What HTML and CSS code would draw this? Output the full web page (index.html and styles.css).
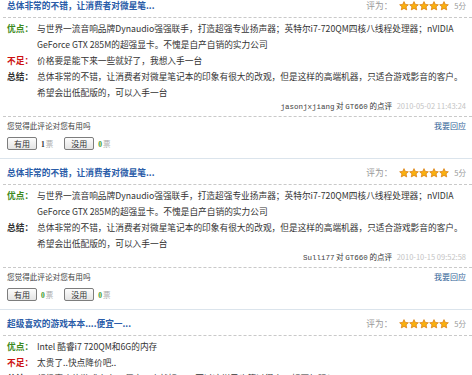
FILE: index.html
```html
<!DOCTYPE html>
<html lang="zh-CN">
<head>
  <meta charset="UTF-8">
  <title>用户点评</title>
  <link rel="stylesheet" href="styles.css">
</head>
<body>
  <svg width="0" height="0" class="defs">
    <defs>
      <symbol id="star" viewBox="0 0 20 20">
        <path d="M10 1.2l2.6 5.6 6.1.7-4.5 4.2 1.2 6.1L10 14.8l-5.4 3 1.2-6.1L1.3 7.5l6.1-.7z" fill="#f9b010" stroke="#d9780a" stroke-width="1.4" stroke-linejoin="round"/>
      </symbol>
    </defs>
  </svg>

  <div class="list">
    <div class="item">
      <div class="head">
        <a class="title" href="#">总体非常的不错，让消费者对微星笔...</a>
        <div class="rate">
          <span class="rate-label">评为：</span>
          <span class="stars">
            <svg><use href="#star"/></svg><svg><use href="#star"/></svg><svg><use href="#star"/></svg><svg><use href="#star"/></svg><svg><use href="#star"/></svg>
          </span>
          <span class="score">5分</span>
        </div>
      </div>
      <div class="body">
        <div class="row"><span class="label good">优点：</span><span class="text">与世界一流音响品牌Dynaudio强强联手，打造超强专业扬声器；英特尔i7-720QM四核八线程处理器；nVIDIA GeForce GTX 285M的超强显卡。不愧是自产自销的实力公司</span></div>
        <div class="row"><span class="label bad">不足：</span><span class="text">价格要是能下来一些就好了，我想入手一台</span></div>
        <div class="row"><span class="label sum">总结：</span><span class="text">总体非常的不错，让消费者对微星笔记本的印象有很大的改观，但是这样的高端机器，只适合游戏影音的客户。希望会出低配版的，可以入手一台</span></div>
      </div>
      <div class="author"><span class="user">jasonjxjiang</span> 对 <span class="user">GT660</span> 的点评 <span class="date">2010-05-02 11:43:24</span></div>
      <div class="foot">
        <div class="ask"><span>您觉得此评论对您有用吗</span><a href="#" class="reply">我要回应</a></div>
        <div class="votes">
          <button>有用</button><span class="count"><b>1</b>票</span>
          <button>没用</button><span class="count"><b class="zero">0</b>票</span>
        </div>
      </div>
    </div>

    <div class="item">
      <div class="head">
        <a class="title" href="#">总体非常的不错，让消费者对微星笔...</a>
        <div class="rate">
          <span class="rate-label">评为：</span>
          <span class="stars">
            <svg><use href="#star"/></svg><svg><use href="#star"/></svg><svg><use href="#star"/></svg><svg><use href="#star"/></svg><svg><use href="#star"/></svg>
          </span>
          <span class="score">5分</span>
        </div>
      </div>
      <div class="body">
        <div class="row"><span class="label good">优点：</span><span class="text">与世界一流音响品牌Dynaudio强强联手，打造超强专业扬声器；英特尔i7-720QM四核八线程处理器；nVIDIA GeForce GTX 285M的超强显卡。不愧是自产自销的实力公司</span></div>
        <div class="row"><span class="label sum">总结：</span><span class="text">总体非常的不错，让消费者对微星笔记本的印象有很大的改观，但是这样的高端机器，只适合游戏影音的客户。希望会出低配版的，可以入手一台</span></div>
      </div>
      <div class="author"><span class="user">Sulli77</span> 对 <span class="user">GT660</span> 的点评 <span class="date">2010-10-15 09:52:58</span></div>
      <div class="foot">
        <div class="ask"><span>您觉得此评论对您有用吗</span><a href="#" class="reply">我要回应</a></div>
        <div class="votes">
          <button>有用</button><span class="count"><b class="zero">0</b>票</span>
          <button>没用</button><span class="count"><b class="zero">0</b>票</span>
        </div>
      </div>
    </div>

    <div class="item">
      <div class="head">
        <a class="title" href="#">超级喜欢的游戏本本....便宜一...</a>
        <div class="rate">
          <span class="rate-label">评为：</span>
          <span class="stars">
            <svg><use href="#star"/></svg><svg><use href="#star"/></svg><svg><use href="#star"/></svg><svg><use href="#star"/></svg><svg><use href="#star"/></svg>
          </span>
          <span class="score">5分</span>
        </div>
      </div>
      <div class="body">
        <div class="row"><span class="label good">优点：</span><span class="text">Intel 酷睿i7 720QM和6G的内存</span></div>
        <div class="row"><span class="label bad">不足：</span><span class="text">太贵了..快点降价吧..</span></div>
        <div class="row"><span class="label sum">总结：</span><span class="text">超级喜欢的游戏本本....便宜一点就好了....不过这样子也算过得去....好要加强！</span></div>
      </div>
    </div>
  </div>
</body>
</html>
```

FILE: styles.css
```css
body {
  margin: 0;
  background: #fff;
  font-family: "Noto Sans CJK SC", "Liberation Sans", sans-serif;
  font-size: 8.7px;
  color: #333;
  overflow: hidden;
}

.defs {
  position: absolute;
}

a {
  text-decoration: none;
}

.list {
  margin-top: -8px;
}

.item {
  padding-left: 3px;
  border-bottom: 1px solid #dbe4ec;
}

.head {
  display: flex;
  justify-content: space-between;
  align-items: center;
  height: 18px;
  padding: 7px 6px 0 4px;
  line-height: 14px;
  border-bottom: 1px dashed #c9c9c9;
  align-items: flex-start;
}

.title {
  color: #2a5ca8;
  font-weight: bold;
}

.rate {
  display: flex;
  align-items: center;
  height: 14px;
}

.rate-label {
  color: #999;
  margin-right: 7px;
}

.stars {
  display: flex;
  gap: 0;
}

.stars svg {
  width: 10px;
  height: 10px;
}

.score {
  color: #999;
  font-size: 7.5px;
  margin-left: 5px;
}

.body {
  padding: 3px 6px 0 4px;
}

.row {
  display: flex;
  line-height: 16px;
}

.label {
  flex: 0 0 30px;
  font-weight: bold;
}

.good { color: #3c8a1c; }
.bad { color: #cc1111; }
.sum { color: #333; }

.text {
  flex: 1;
}

.author {
  text-align: right;
  line-height: 10px;
  font-size: 7.5px;
  padding: 0 6px 4px 0;
  border-bottom: 1px dashed #c9c9c9;
}

.user {
  font-family: "Liberation Mono", monospace;
  font-size: 7.5px;
  color: #444;
}

.date {
  color: #c4c4c4;
  margin-left: 3px;
}

.foot {
  padding: 4px 6px 8px 4px;
}

.ask {
  display: flex;
  justify-content: space-between;
  line-height: 10px;
  font-size: 7.6px;
  color: #444;
}

.reply {
  color: #2f5f96;
  font-size: 8px;
}

.votes {
  display: flex;
  align-items: center;
  margin-top: 6px;
  height: 13px;
}

.votes button {
  width: 30px;
  height: 13px;
  padding: 0;
  border: 1px solid #7d7d7d;
  border-radius: 2px;
  background: linear-gradient(to bottom, #fdfdfd, #e4e4e4);
  font-family: "Noto Sans CJK SC", sans-serif;
  font-size: 8px;
  line-height: 11px;
  color: #333;
}

.count {
  color: #aaa;
  font-size: 7.5px;
  margin: 0 11px 0 4px;
}

.count b {
  font-family: "Liberation Serif", serif;
  color: #333;
  margin-right: 1px;
}

.count b.zero {
  color: #3c9a2a;
}
```
